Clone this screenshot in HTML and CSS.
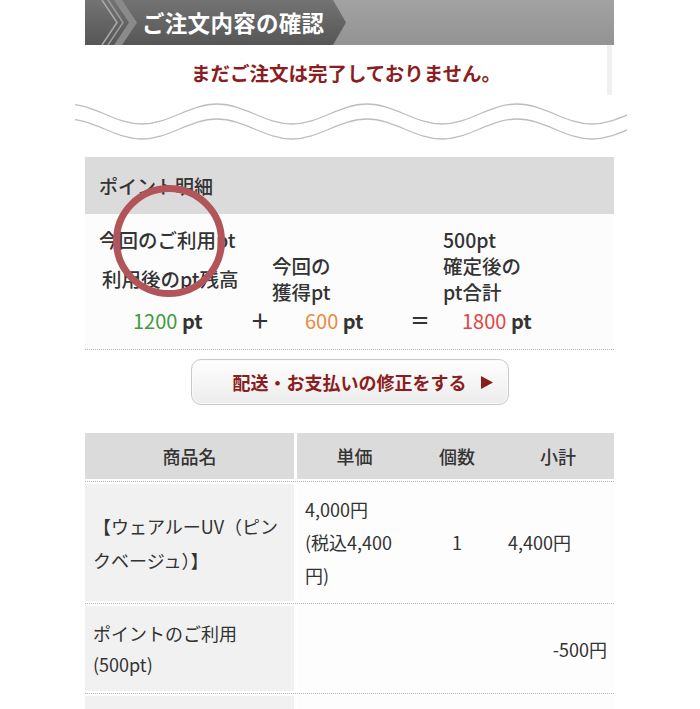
FILE: index.html
```html
<!DOCTYPE html>
<html lang="ja">
<head>
<meta charset="utf-8">
<link rel="stylesheet" href="styles.css">
</head>
<body>
<div class="page">
  <div class="hdr">
    <svg class="chev" width="40" height="45" viewBox="0 0 40 45">
      <polyline points="2,0 17,22.5 2,45" fill="none" stroke="#a8a8a8" stroke-width="1.6"/>
      <polyline points="8,0 23,22.5 8,45" fill="none" stroke="#9a9a9a" stroke-width="1.6"/>
      <polygon points="14,0 22,0 37,22.5 22,45 14,45 29,22.5" fill="#8a8a8a"/>
    </svg>
    <h1 class="hdr-title">ご注文内容の確認</h1>
  </div>
  <div class="msg"><p class="msg-text">まだご注文は完了しておりません。</p></div>
  <svg class="wave" width="552" height="44" viewBox="0 0 552 44">
    <path d="M -8 4 C 19.3 4, 39.7 24, 67 24 S 114.7 4, 142 4 S 189.7 24, 217 24 S 264.7 4, 292 4 S 339.7 24, 367 24 S 414.7 4, 442 4 S 489.7 24, 517 24 S 564.7 4, 592 4" fill="none" stroke="#bdbdbd" stroke-width="1.3"/>
    <path d="M -8 19 C 19.3 19, 39.7 39, 67 39 S 114.7 19, 142 19 S 189.7 39, 217 39 S 264.7 19, 292 19 S 339.7 39, 367 39 S 414.7 19, 442 19 S 489.7 39, 517 39 S 564.7 19, 592 19" fill="none" stroke="#bdbdbd" stroke-width="1.3"/>
  </svg>

  <section class="pts">
    <div class="pts-head">ポイント明細</div>
    <div class="pts-body">
      <div class="pts-grid">
        <div class="c1">今回のご利用pt</div>
        <div class="c2"></div>
        <div class="c3">500pt</div>
        <div class="c1 mid">利用後のpt残高</div>
        <div class="c2">今回の<br>獲得pt</div>
        <div class="c3">確定後の<br>pt合計</div>
      </div>
      <div class="calc">
        <div class="n1"><span class="green">1200</span> <b>pt</b></div>
        <div class="op">＋</div>
        <div class="n2"><span class="orange">600</span> <b>pt</b></div>
        <div class="op">＝</div>
        <div class="n3"><span class="red">1800</span> <b>pt</b></div>
      </div>
    </div>
  </section>

  <div class="btn-wrap">
    <div class="btn">配送・お支払いの修正をする<svg class="tri" width="12" height="13" viewBox="0 0 12 13"><polygon points="0,0 12,6.5 0,13" fill="#8c1d1d"/></svg></div>
  </div>

  <div class="tbl">
    <div class="row head">
      <div class="cell left">商品名</div>
      <div class="cell right sub">
        <div class="h">単価</div>
        <div class="h">個数</div>
        <div class="h">小計</div>
      </div>
    </div>
    <div class="row item">
      <div class="cell left">【ウェアルーUV（ピン<br>クベージュ）】</div>
      <div class="cell right sub">
        <div class="price">4,000円<br>(税込4,400<br>円)</div>
        <div class="qty">1</div>
        <div class="sum">4,400円</div>
      </div>
    </div>
    <div class="row item2">
      <div class="cell left">ポイントのご利用<br>(500pt)</div>
      <div class="cell right amt">-500円</div>
    </div>
    <div class="row item3">
      <div class="cell left"></div>
      <div class="cell right"></div>
    </div>
  </div>

  <div class="ring"></div>
</div>
</body>
</html>
```
FILE: styles.css
```css
html, body {
  margin: 0;
  padding: 0;
  background: #fff;
}
body {
  font-family: "Noto Sans CJK JP", "Noto Sans", sans-serif;
  color: #333;
  overflow: hidden;
}
.page {
  position: relative;
  margin-left: 85px;
  width: 529px;
}
.hdr {
  position: relative;
  height: 45px;
  background: linear-gradient(#a2a2a2, #939393);
  display: flex;
  align-items: center;
}
.hdr::before {
  content: "";
  position: absolute;
  left: 0;
  top: 0;
  bottom: 0;
  width: 262px;
  clip-path: polygon(0 0, 248px 0, 261px 50%, 248px 100%, 0 100%);
  background: linear-gradient(#737373, #565656);
}
.chev {
  position: relative;
  margin-left: 15px;
  flex: none;
}
.hdr-title {
  position: relative;
  margin: 0 0 0 2px;
  font-size: 22.5px;
  font-weight: 700;
  color: #fff;
  letter-spacing: 0.3px;
  line-height: 1;
}
.msg {
  height: 50px;
  margin-right: 2px;
  border-right: 5px solid #f0f0f0;
  display: flex;
  align-items: center;
  justify-content: center;
}
.msg-text {
  margin: 4px 0 0 0;
  font-size: 19.5px;
  font-weight: 700;
  color: #8a1e22;
}
.wave {
  display: block;
  margin: 5px 0 0 -10px;
}
.pts {
  margin-top: 13px;
}
.pts-head {
  height: 57px;
  background: #dcdbdc;
  display: flex;
  align-items: center;
  padding-left: 14px;
  font-size: 19px;
  font-weight: 500;
}
.pts-body {
  background: #fcfcfc;
  border-bottom: 1px dotted #b5b5b5;
  padding: 13px 0 15px 14px;
}
.pts-grid {
  display: grid;
  grid-template-columns: 173px 171px 1fr;
  font-size: 19.5px;
  font-weight: 500;
  line-height: 26px;
}
.pts-grid .mid {
  align-self: center;
  padding-left: 3px;
}
.calc {
  display: grid;
  grid-template-columns: 117px 55px 105px 52px 1fr;
  padding-left: 34px;
  margin-top: 3px;
  font-size: 20px;
  line-height: 26px;
}
.calc b { font-weight: 700; }
.calc .op { font-weight: 700; }
.green { color: #3d9a3d; }
.orange { color: #ea8a3c; }
.red { color: #e14545; }
.btn-wrap {
  display: flex;
  justify-content: center;
  padding-top: 9px;
}
.btn {
  position: relative;
  width: 316px;
  height: 44px;
  border: 1px solid #c9c9c9;
  border-radius: 10px;
  background: linear-gradient(#ffffff, #ececec);
  box-shadow: inset 0 0 0 1px #fafafa;
  display: flex;
  align-items: center;
  justify-content: center;
  font-size: 18px;
  font-weight: 700;
  color: #8c1d1d;
}
.tri {
  position: absolute;
  right: 15px;
  top: 16px;
}
.tbl {
  margin-top: 28px;
}
.row {
  display: grid;
  grid-template-columns: 209px 1fr;
  column-gap: 3px;
  border-bottom: 1px dotted #b5b5b5;
  padding-bottom: 2px;
  margin-bottom: 2px;
}
.cell { font-size: 18px; }
.head .cell {
  background: #dcdbdc;
  height: 46px;
  font-weight: 500;
}
.head .left {
  display: flex;
  align-items: center;
  justify-content: center;
}
.sub {
  display: grid;
  grid-template-columns: 115px 90px 1fr;
}
.head .h {
  display: flex;
  align-items: center;
  justify-content: center;
}
.item .left, .item2 .left, .item3 .left {
  background: #f1f1f1;
}
.item .right, .item2 .right, .item3 .right {
  background: #fdfdfd;
}
.item { min-height: 117px; }
.item .left {
  display: flex;
  align-items: center;
  padding-left: 8px;
  line-height: 34px;
}
.item .sub > div {
  align-self: center;
  line-height: 33px;
}
.price { padding-left: 8px; }
.qty { text-align: center; }
.sum { padding-left: 6px; }
.item2 { min-height: 85px; }
.item2 .left {
  display: flex;
  align-items: center;
  padding-left: 8px;
  line-height: 31px;
}
.amt {
  display: flex;
  align-items: center;
  justify-content: flex-end;
  padding-right: 7px;
}
.item3 { height: 60px; border-bottom: none; }
.ring {
  position: absolute;
  left: 28px;
  top: 185px;
  width: 98px;
  height: 98px;
  border: 7px solid #b2555a;
  border-radius: 50%;
}
```
